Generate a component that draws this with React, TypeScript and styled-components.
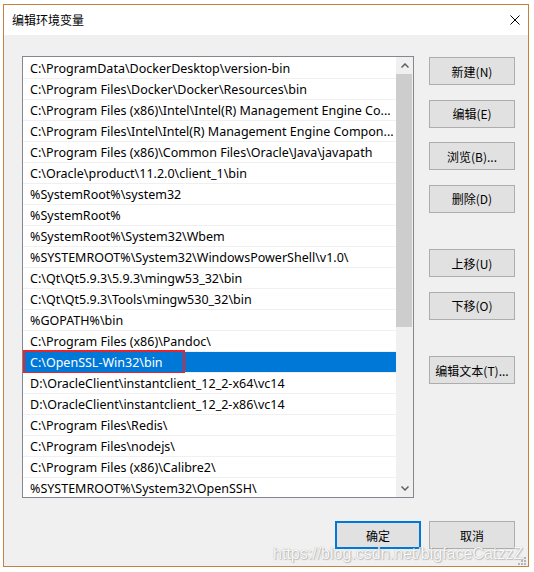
import React from "react";
import styled, { createGlobalStyle } from "styled-components";

const Global = createGlobalStyle`
  html, body { margin: 0; padding: 0; background: #ffffff; }
  body { width: 534px; height: 572px; overflow: hidden; }
`;

const UI_FONT = `"Noto Sans", "Noto Sans CJK SC", sans-serif`;

const Window = styled.div`
  position: relative;
  box-sizing: border-box;
  margin: 4px 0 0 3px;
  width: 526px;
  height: 563px;
  border: 1px solid #c8803f;
  display: flex;
  flex-direction: column;
  font-family: ${UI_FONT};
  font-size: 12px;
  color: #000;
`;

const TitleBar = styled.div`
  height: 30px;
  background: #ffffff;
  display: flex;
  align-items: center;
  justify-content: space-between;
  padding: 0 8px 0 8px;
`;

const Title = styled.span`
  font-family: "Noto Sans CJK SC", sans-serif;
  font-size: 12px;
  color: #000;
  margin-top: -1px;
`;

const CloseIcon = styled.svg`
  width: 10px;
  height: 10px;
  margin-top: -1px;
`;

const Body = styled.div`
  flex: 1;
  background: #f0f0f0;
  padding: 21px 13px 17px 18px;
  display: flex;
  flex-direction: column;
`;

const Main = styled.div`
  display: flex;
  gap: 15px;
`;

const ListBox = styled.div`
  box-sizing: border-box;
  width: 392px;
  height: 442px;
  border: 1px solid #828790;
  background: #ffffff;
  display: flex;
  overflow: hidden;
`;

const Rows = styled.div`
  width: 373px;
  padding-top: 1px;
  overflow: hidden;
`;

const Row = styled.div<{ $selected?: boolean }>`
  position: relative;
  height: 20px;
  border-bottom: 1px solid #f0f0f0;
  background: ${(p) => (p.$selected ? "#0078d7" : "#ffffff")};
  color: ${(p) => (p.$selected ? "#ffffff" : "#000000")};
  display: flex;
  align-items: center;
  padding-left: 7px;
  white-space: nowrap;
  font-size: 12.5px;
`;

const Highlight = styled.div`
  position: absolute;
  left: 0;
  top: -2px;
  width: 162px;
  height: 24px;
  box-sizing: border-box;
  border: 2px solid #e5262f;
  pointer-events: none;
`;

const ScrollBar = styled.div`
  width: 17px;
  background: #f0f0f0;
  display: flex;
  flex-direction: column;
`;

const ArrowBox = styled.div`
  height: 17px;
  display: flex;
  align-items: center;
  justify-content: center;
`;

const Thumb = styled.div`
  height: 253px;
  width: 16px;
  background: #cdcdcd;
`;

const Track = styled.div`
  flex: 1;
`;

const ButtonColumn = styled.div`
  display: flex;
  flex-direction: column;
  gap: 14.5px;
  margin-top: 1px;
`;

const Btn = styled.div<{ $gapBefore?: boolean; $default?: boolean }>`
  box-sizing: border-box;
  width: 86px;
  height: 28px;
  background: #e1e1e1;
  border: ${(p) => (p.$default ? "2px solid #0078d7" : "1px solid #adadad")};
  display: flex;
  align-items: center;
  justify-content: center;
  font-family: "Noto Sans CJK SC", sans-serif;
  font-size: 12px;
  color: #000;
  margin-top: ${(p) => (p.$gapBefore ? "22px" : "0")};
`;

const Footer = styled.div`
  margin-top: 23px;
  display: flex;
  justify-content: flex-end;
  gap: 8px;
`;

const Watermark = styled.div`
  position: absolute;
  right: 5px;
  bottom: 3px;
  font-family: "Liberation Sans", Arial, sans-serif;
  font-size: 16px;
  color: rgba(255, 255, 255, 0.95);
  text-shadow: 0 0 1px rgba(110, 110, 110, 0.6), 1px 1px 1px rgba(140, 140, 140, 0.45);
  pointer-events: none;
  white-space: nowrap;
`;

const Grip = styled.svg`
  position: absolute;
  right: 2px;
  bottom: 1px;
  width: 9px;
  height: 9px;
`;

const paths: string[] = [
  "C:\\ProgramData\\DockerDesktop\\version-bin",
  "C:\\Program Files\\Docker\\Docker\\Resources\\bin",
  "C:\\Program Files (x86)\\Intel\\Intel(R) Management Engine Co...",
  "C:\\Program Files\\Intel\\Intel(R) Management Engine Compon...",
  "C:\\Program Files (x86)\\Common Files\\Oracle\\Java\\javapath",
  "C:\\Oracle\\product\\11.2.0\\client_1\\bin",
  "%SystemRoot%\\system32",
  "%SystemRoot%",
  "%SystemRoot%\\System32\\Wbem",
  "%SYSTEMROOT%\\System32\\WindowsPowerShell\\v1.0\\",
  "C:\\Qt\\Qt5.9.3\\5.9.3\\mingw53_32\\bin",
  "C:\\Qt\\Qt5.9.3\\Tools\\mingw530_32\\bin",
  "%GOPATH%\\bin",
  "C:\\Program Files (x86)\\Pandoc\\",
  "C:\\OpenSSL-Win32\\bin",
  "D:\\OracleClient\\instantclient_12_2-x64\\vc14",
  "D:\\OracleClient\\instantclient_12_2-x86\\vc14",
  "C:\\Program Files\\Redis\\",
  "C:\\Program Files\\nodejs\\",
  "C:\\Program Files (x86)\\Calibre2\\",
  "%SYSTEMROOT%\\System32\\OpenSSH\\",
];

const SELECTED = 14;

const sideButtons: { label: string; gapBefore?: boolean }[] = [
  { label: "新建(N)" },
  { label: "编辑(E)" },
  { label: "浏览(B)..." },
  { label: "删除(D)" },
  { label: "上移(U)", gapBefore: true },
  { label: "下移(O)" },
  { label: "编辑文本(T)...", gapBefore: true },
];

export default function App() {
  return (
    <>
      <Global />
      <Window>
        <TitleBar>
          <Title>编辑环境变量</Title>
          <CloseIcon viewBox="0 0 10 10">
            <path d="M0.5 0.5 L9.5 9.5 M9.5 0.5 L0.5 9.5" stroke="#000" strokeWidth="1" fill="none" />
          </CloseIcon>
        </TitleBar>
        <Body>
          <Main>
            <ListBox>
              <Rows>
                {paths.map((p, i) => (
                  <Row key={i} $selected={i === SELECTED}>
                    {p}
                    {i === SELECTED && <Highlight />}
                  </Row>
                ))}
              </Rows>
              <ScrollBar>
                <ArrowBox>
                  <svg width="8" height="5" viewBox="0 0 8 5">
                    <polyline points="0.5,4.5 4,1 7.5,4.5" stroke="#606060" strokeWidth="1.5" fill="none" />
                  </svg>
                </ArrowBox>
                <Thumb />
                <Track />
                <ArrowBox>
                  <svg width="8" height="5" viewBox="0 0 8 5">
                    <polyline points="0.5,0.5 4,4 7.5,0.5" stroke="#606060" strokeWidth="1.5" fill="none" />
                  </svg>
                </ArrowBox>
              </ScrollBar>
            </ListBox>
            <ButtonColumn>
              {sideButtons.map((b) => (
                <Btn key={b.label} $gapBefore={b.gapBefore}>
                  {b.label}
                </Btn>
              ))}
            </ButtonColumn>
          </Main>
          <Footer>
            <Btn $default>确定</Btn>
            <Btn>取消</Btn>
          </Footer>
        </Body>
        <Watermark>https://blog.csdn.net/bigfaceCatzzZ</Watermark>
        <Grip viewBox="0 0 9 9">
          <rect x="7" y="1" width="2" height="2" fill="#b5b5b5" />
          <rect x="4" y="4" width="2" height="2" fill="#b5b5b5" />
          <rect x="7" y="4" width="2" height="2" fill="#b5b5b5" />
          <rect x="1" y="7" width="2" height="2" fill="#b5b5b5" />
          <rect x="4" y="7" width="2" height="2" fill="#b5b5b5" />
          <rect x="7" y="7" width="2" height="2" fill="#b5b5b5" />
        </Grip>
      </Window>
    </>
  );
}
